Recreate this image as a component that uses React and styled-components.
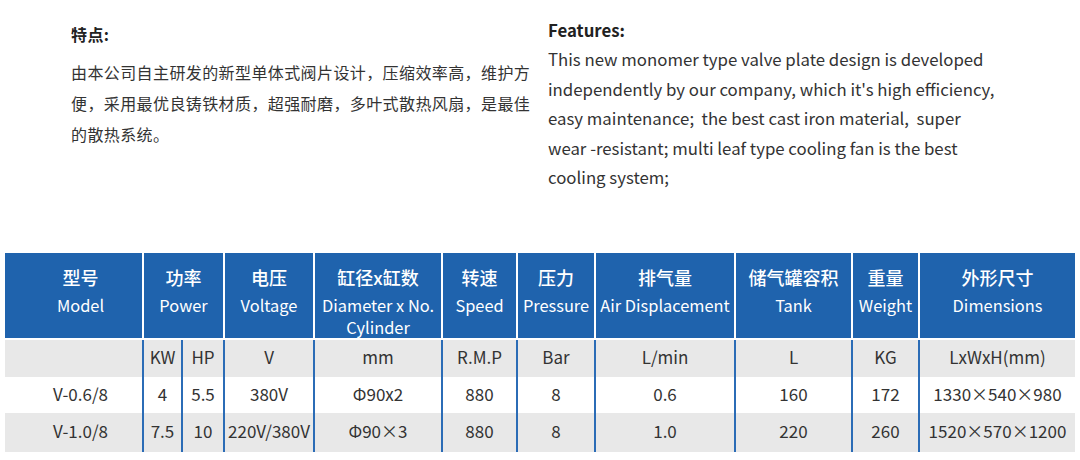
import React from 'react';
import styled, { createGlobalStyle } from 'styled-components';

const GlobalStyle = createGlobalStyle`
  html, body {
    margin: 0;
    padding: 0;
    background: #ffffff;
  }
  body {
    font-family: 'Noto Sans CJK SC', 'Noto Sans', sans-serif;
    color: #333333;
  }
`;

const Page = styled.div`
  width: 1080px;
  height: 460px;
  overflow: hidden;
`;

const Intro = styled.div`
  display: flex;
  height: 253px;
`;

const ChineseBlock = styled.div`
  width: 462px;
  margin-left: 71px;
  padding-top: 22px;
  font-size: 16px;
  letter-spacing: 0.4px;
`;

const EnglishBlock = styled.div`
  width: 454px;
  margin-left: 15px;
  padding-top: 17px;
  font-size: 16.8px;
`;

const Title = styled.div`
  font-weight: 700;
  color: #222222;
  line-height: ${(p) => p.$lh}px;
  margin-bottom: ${(p) => p.$gap}px;
`;

const Paragraph = styled.p`
  margin: 0;
  line-height: ${(p) => p.$lh}px;
  color: #333333;
`;

const Table = styled.table`
  margin-left: 5px;
  width: 1070px;
  border-collapse: collapse;
  table-layout: fixed;
`;

const HeadCell = styled.th`
  background: #1f63ad;
  color: #ffffff;
  font-weight: 400;
  vertical-align: top;
  text-align: center;
  height: 85px;
  padding: 9px 0 0;
  box-sizing: border-box;
  border-bottom: 2px solid #ffffff;
  border-left: 2px solid #ffffff;
  &:first-child {
    border-left: none;
    padding-left: 14px;
  }
`;

const HeadCn = styled.div`
  font-size: 18px;
  font-weight: 500;
  line-height: 30px;
  margin-bottom: 2px;
`;

const HeadEn = styled.div`
  font-size: 16.4px;
  line-height: 22px;
  white-space: nowrap;
`;

const Row = styled.tr`
  background: ${(p) => (p.$shade ? '#e8e8e8' : '#ffffff')};
  height: ${(p) => p.$h}px;
`;

const Cell = styled.td`
  font-size: 17px;
  color: #333333;
  text-align: center;
  padding: 0 0 4px;
  white-space: nowrap;
  border-left: 2px solid #2b6cb6;
  &:first-child {
    border-left: none;
    padding-left: 14px;
  }
`;

const cols = [138, 39, 42, 90, 128, 75, 78, 140, 117, 67, 156];

const headers = [
  { cn: '型号', en: ['Model'] },
  { cn: '功率', en: ['Power'], span: 2 },
  { cn: '电压', en: ['Voltage'] },
  { cn: '缸径x缸数', en: ['Diameter x No.', 'Cylinder'] },
  { cn: '转速', en: ['Speed'] },
  { cn: '压力', en: ['Pressure'] },
  { cn: '排气量', en: ['Air Displacement'] },
  { cn: '储气罐容积', en: ['Tank'] },
  { cn: '重量', en: ['Weight'] },
  { cn: '外形尺寸', en: ['Dimensions'] },
];

const rows = [
  { shade: true, h: 38, cells: ['', 'KW', 'HP', 'V', 'mm', 'R.M.P', 'Bar', 'L/min', 'L', 'KG', 'LxWxH(mm)'] },
  { shade: false, h: 36, cells: ['V-0.6/8', '4', '5.5', '380V', 'Φ90x2', '880', '8', '0.6', '160', '172', '1330×540×980'] },
  { shade: true, h: 39, cells: ['V-1.0/8', '7.5', '10', '220V/380V', 'Φ90×3', '880', '8', '1.0', '220', '260', '1520×570×1200'] },
];

export default function App() {
  return (
    <Page>
      <GlobalStyle />
      <Intro>
        <ChineseBlock>
          <Title $lh={24} $gap={11}>特点:</Title>
          <Paragraph $lh={31}>
            由本公司自主研发的新型单体式阀片设计，压缩效率高，维护方便，采用最优良铸铁材质，超强耐磨，多叶式散热风扇，是最佳的散热系统。
          </Paragraph>
        </ChineseBlock>
        <EnglishBlock>
          <Title $lh={26} $gap={2}>Features:</Title>
          <Paragraph $lh={29.6}>
            This new monomer type valve plate design is developed independently by our company, which it's high efficiency, easy maintenance;&nbsp; the best cast iron material,&nbsp; super wear -resistant; multi leaf type cooling fan is the best cooling system;
          </Paragraph>
        </EnglishBlock>
      </Intro>
      <Table>
        <colgroup>
          {cols.map((w, i) => (
            <col key={i} style={{ width: w }} />
          ))}
        </colgroup>
        <thead>
          <tr>
            {headers.map((h) => (
              <HeadCell key={h.cn} colSpan={h.span || 1}>
                <HeadCn>{h.cn}</HeadCn>
                {h.en.map((line) => (
                  <HeadEn key={line}>{line}</HeadEn>
                ))}
              </HeadCell>
            ))}
          </tr>
        </thead>
        <tbody>
          {rows.map((r, ri) => (
            <Row key={ri} $shade={r.shade} $h={r.h}>
              {r.cells.map((c, ci) => (
                <Cell key={ci}>{c}</Cell>
              ))}
            </Row>
          ))}
        </tbody>
      </Table>
    </Page>
  );
}
